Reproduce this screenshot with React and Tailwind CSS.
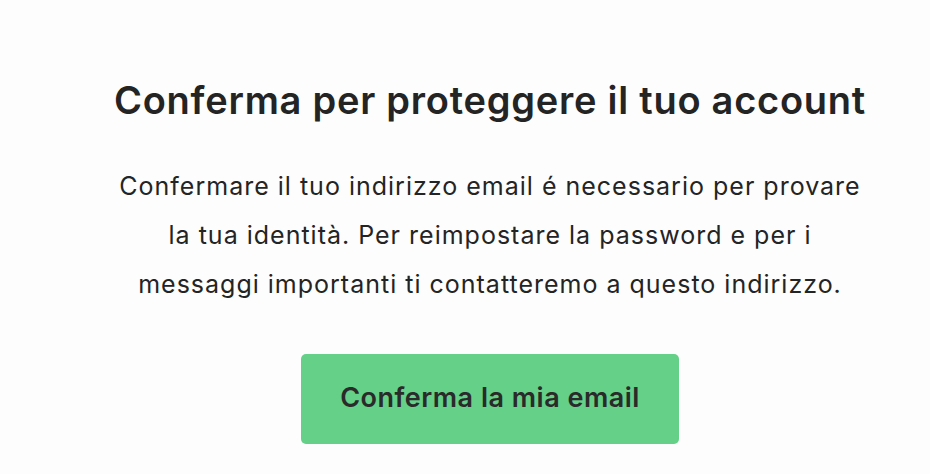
import React from "react";

const App = () => {
  return (
    <div className="min-h-screen w-[930px] bg-[#fdfdfd] font-['Inter',sans-serif] text-[#242424]">
      <div className="ml-[50px] w-[880px] pt-[75px] flex flex-col items-center text-center">
        <h1 className="text-[38px] leading-[50px] font-semibold tracking-[0.75px]">
          Conferma per proteggere il tuo account
        </h1>
        <p className="mt-[37px] w-[800px] text-[25px] leading-[49px] tracking-[1px]">
          Confermare il tuo indirizzo email é necessario per provare
          <br />
          la tua identità. Per reimpostare la password e per i
          <br />
          messaggi importanti ti contatteremo a questo indirizzo.
        </p>
        <button className="mt-[45px] w-[378px] h-[90px] rounded-[5px] bg-[#64d088] pb-[2px] text-[27px] font-semibold tracking-[0.5px] text-[#2a2a2a]">
          Conferma la mia email
        </button>
      </div>
    </div>
  );
};

export default App;
